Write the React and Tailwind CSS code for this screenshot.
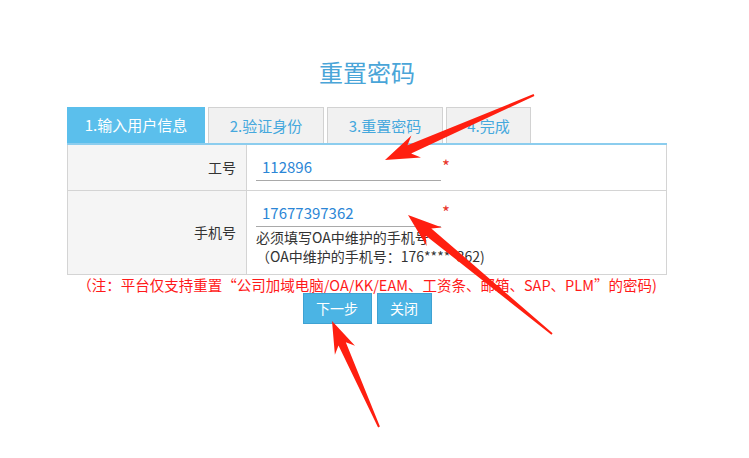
import React from "react";

const font = { fontFamily: '"Noto Sans CJK SC", "Noto Sans", sans-serif' };

const tabs = [
  { label: "1.输入用户信息", w: "w-[138px]", active: true },
  { label: "2.验证身份", w: "w-[116px]" },
  { label: "3.重置密码", w: "w-[116px]" },
  { label: "4.完成", w: "w-[85px]" },
];

// red annotation arrows drawn over the page
function arrowPoints([tx, ty], [px, py], head = 34, hw = 12, sw = 4.5) {
  const len = Math.hypot(px - tx, py - ty);
  const dx = (px - tx) / len;
  const dy = (py - ty) / len;
  const nx = -dy;
  const ny = dx;
  const bx = px - dx * head;
  const by = py - dy * head;
  const mx = px - dx * head * 0.78;
  const my = py - dy * head * 0.78;
  const pts = [
    [px, py],
    [bx + nx * hw, by + ny * hw],
    [mx + nx * sw, my + ny * sw],
    [tx + nx * 1, ty + ny * 1],
    [tx - nx * 1, ty - ny * 1],
    [mx - nx * sw, my - ny * sw],
    [bx - nx * hw, by - ny * hw],
  ];
  return pts.map((p) => p.map((v) => v.toFixed(1)).join(",")).join(" ");
}

function Arrows() {
  return (
    <svg className="pointer-events-none absolute left-0 top-0" width="749" height="458">
      <polygon points={arrowPoints([534, 95], [385, 160])} fill="#ff1f10" />
      <polygon points={arrowPoints([552, 334], [408, 215])} fill="#ff1f10" />
      <polygon points={arrowPoints([379, 427], [332, 321], 32, 11, 4)} fill="#ff1f10" />
    </svg>
  );
}

function Field({ value }) {
  return (
    <div className="flex items-start">
      <div className="w-[185px] border-b border-[#a9a9a9] pb-[3px] pl-[6px] text-[15px] leading-[20px] text-[#2b86d6]">
        {value}
      </div>
      <span className="ml-[1px] mt-[-1px] text-[17px] leading-[20px] text-[#e8352a]">*</span>
    </div>
  );
}

export default function App() {
  return (
    <div className="relative h-[458px] w-[749px] overflow-hidden bg-white" style={font}>
      <div className="ml-[67px] w-[600px] pt-[55px]">
        <h1 className="text-center text-[24px] leading-[34px] text-[#4aa5d8]">重置密码</h1>

        <div className="mt-[18px] flex gap-[3px]">
          {tabs.map((t) => (
            <div
              key={t.label}
              className={
                t.active
                  ? `${t.w} h-[36px] bg-[#5bbfec] text-center text-[15px] leading-[36px] text-white`
                  : `${t.w} h-[36px] border border-b-0 border-[#d2d2d2] bg-[#f1f1f1] text-center text-[15px] leading-[35px] text-[#45a8dd]`
              }
            >
              {t.label}
            </div>
          ))}
        </div>

        <div className="border-t-2 border-[#8ccdee]">
          <div className="border-x border-b border-[#d4d4d4]">
            <div className="flex h-[46px] border-b border-[#d4d4d4]">
              <div className="flex w-[179px] items-center justify-end border-r border-[#d4d4d4] bg-[#f5f5f5] pr-[10px] text-[14px] text-[#333]">
                工号
              </div>
              <div className="flex-1 pl-[9px] pt-[12px]">
                <Field value="112896" />
              </div>
            </div>
            <div className="flex h-[83px]">
              <div className="flex w-[179px] items-center justify-end border-r border-[#d4d4d4] bg-[#f5f5f5] pr-[10px] text-[14px] text-[#333]">
                手机号
              </div>
              <div className="flex-1 pl-[9px] pt-[12px]">
                <Field value="17677397362" />
                <div className="mt-[1px] text-[14px] leading-[19px] text-[#333]">
                  <div>必须填写OA中维护的手机号</div>
                  <div>（OA中维护的手机号：176*****362)</div>
                </div>
              </div>
            </div>
          </div>
        </div>

        <p className="whitespace-nowrap text-center text-[14.5px] leading-[20px] text-[#ff1a1a]">
          （注：平台仅支持重置“公司加域电脑/OA/KK/EAM、工资条、邮箱、SAP、PLM”的密码)
        </p>

        <div className="mt-[-2px] flex justify-center gap-[5px]">
          <button className="h-[31px] w-[69px] border border-[#3ea2d3] bg-[#4bb4e4] text-[14px] text-white">
            下一步
          </button>
          <button className="h-[31px] w-[55px] border border-[#3ea2d3] bg-[#4bb4e4] text-[14px] text-white">
            关闭
          </button>
        </div>
      </div>
      <Arrows />
    </div>
  );
}
